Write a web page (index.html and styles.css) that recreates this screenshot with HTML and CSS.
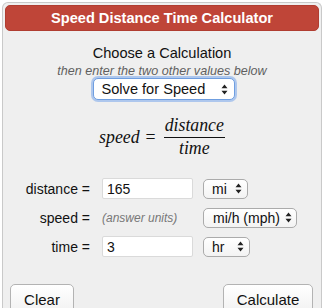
FILE: index.html
```html
<!DOCTYPE html>
<html>
<head>
<meta charset="utf-8">
<link rel="stylesheet" href="styles.css">
</head>
<body>
<div class="calc">
  <div class="title">Speed Distance Time Calculator</div>
  <div class="choose">
    <div class="choose-h">Choose a Calculation</div>
    <div class="choose-sub">then enter the two other values below</div>
    <div class="sel sel-main"><span>Solve for Speed</span><svg class="arr" width="7" height="11" viewBox="0 0 7 11"><path d="M3.5 0.5 L6.5 4.3 H0.5 Z M3.5 10.5 L6.5 6.7 H0.5 Z" fill="#222"/></svg></div>
  </div>
  <div class="formula">
    <span class="f-var">speed</span>
    <span class="f-eq">=</span>
    <span class="frac"><span class="num">distance</span><span class="den">time</span></span>
  </div>
  <div class="rows">
    <div class="lbl">distance =</div>
    <div class="inp">165</div>
    <div class="unit"><div class="sel sel-mi"><span>mi</span><svg class="arr" width="7" height="11" viewBox="0 0 7 11"><path d="M3.5 0.5 L6.5 4.3 H0.5 Z M3.5 10.5 L6.5 6.7 H0.5 Z" fill="#222"/></svg></div></div>

    <div class="lbl">speed =</div>
    <div class="ans">(answer units)</div>
    <div class="unit"><div class="sel sel-mph"><span>mi/h (mph)</span><svg class="arr" width="7" height="11" viewBox="0 0 7 11"><path d="M3.5 0.5 L6.5 4.3 H0.5 Z M3.5 10.5 L6.5 6.7 H0.5 Z" fill="#222"/></svg></div></div>

    <div class="lbl">time =</div>
    <div class="inp">3</div>
    <div class="unit"><div class="sel sel-hr"><span>hr</span><svg class="arr" width="7" height="11" viewBox="0 0 7 11"><path d="M3.5 0.5 L6.5 4.3 H0.5 Z M3.5 10.5 L6.5 6.7 H0.5 Z" fill="#222"/></svg></div></div>
  </div>
  <div class="buttons">
    <div class="btn btn-clear">Clear</div>
    <div class="btn btn-calc">Calculate</div>
  </div>
</div>
</body>
</html>
```

FILE: styles.css
```css
html, body {
  margin: 0;
  padding: 0;
  background: #ffffff;
}
body {
  font-family: "Liberation Sans", Arial, sans-serif;
  color: #111;
  overflow: hidden;
}
.calc {
  box-sizing: border-box;
  width: 320px;
  height: 306px;
  overflow: hidden;
  margin: 2px 0 0 2px;
  border: 1px solid #c9c9c9;
  border-bottom: none;
  border-radius: 6px 6px 0 0;
  background: #efefef;
  padding: 2px 2px 0 2px;
}
.title {
  height: 26px;
  border-radius: 5px;
  background: #bf4538;
  border: 1px solid #b03d31;
  box-sizing: border-box;
  color: #fff;
  font-weight: bold;
  font-size: 14.6px;
  line-height: 24px;
  text-align: center;
}
.choose {
  display: flex;
  flex-direction: column;
  align-items: center;
  margin-top: 13px;
}
.choose-h {
  font-size: 14.6px;
  line-height: 18px;
  color: #111;
}
.choose-sub {
  font-size: 12.6px;
  font-style: italic;
  line-height: 14px;
  color: #5f5f5f;
  margin-top: 2px;
}
.sel {
  box-sizing: border-box;
  display: flex;
  align-items: center;
  justify-content: space-between;
  background: linear-gradient(#ffffff, #f3f3f3);
  border: 1px solid #ababab;
  border-radius: 5px;
  font-size: 14px;
  color: #111;
  height: 20px;
  padding: 0 5px 0 8px;
}
.sel-main {
  width: 142px;
  height: 22px;
  font-size: 14.6px;
  border-color: #6f9ee0;
  box-shadow: 0 0 0 2px rgba(120, 165, 235, 0.55);
  background: #fff;
  padding: 0 6px 0 8px;
  margin-left: 3px;
}
.sel-mi { width: 45px; }
.sel-mph { width: 94px; padding-left: 9px; padding-right: 4px; }
.sel-hr { width: 47px; }
.arr { flex: none; }
.formula {
  display: flex;
  justify-content: center;
  align-items: center;
  margin-top: 15px;
  font-family: "Liberation Serif", "Times New Roman", serif;
  font-style: italic;
  font-size: 17.8px;
  color: #111;
}
.f-var { margin-top: 1px; }
.f-eq {
  font-style: normal;
  margin: 1px 8px 0 6px;
}
.frac {
  display: flex;
  flex-direction: column;
  align-items: center;
}
.num {
  line-height: 20px;
  padding: 0 1px 2px;
  border-bottom: 1px solid #111;
}
.den {
  line-height: 20px;
}
.rows {
  display: grid;
  grid-template-columns: 85px 91px auto;
  column-gap: 12px;
  row-gap: 8px;
  margin-top: 20px;
  font-size: 14px;
}
.rows > div {
  height: 21px;
  display: flex;
  align-items: center;
}
.lbl {
  justify-content: flex-end;
  color: #111;
}
.inp {
  box-sizing: border-box;
  background: #fff;
  border: 1px solid #dadada;
  border-radius: 2px;
  padding-left: 4px;
  color: #111;
}
.ans {
  font-size: 12px;
  font-style: italic;
  color: #777;
}
.unit {
  margin-left: -2px;
}
.buttons {
  display: flex;
  justify-content: space-between;
  margin-top: 27px;
  padding: 0 6px 0 5px;
}
.btn {
  box-sizing: border-box;
  height: 32px;
  border: 1px solid #b3b3b3;
  border-radius: 5px;
  background: linear-gradient(#ffffff, #f0f0f0);
  font-size: 15px;
  line-height: 30px;
  text-align: center;
  color: #111;
}
.btn-clear { width: 64px; }
.btn-calc { width: 90px; }
```
